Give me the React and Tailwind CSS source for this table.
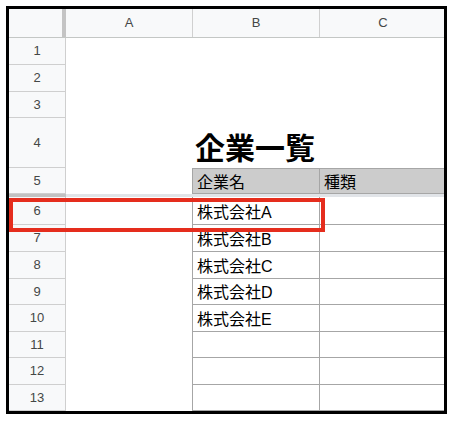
const rows = [
  { n: 1, h: "h-[27px]" },
  { n: 2, h: "h-[27px]" },
  { n: 3, h: "h-[26px]" },
  { n: 4, h: "h-[50px]", title: "企業一覧" },
  { n: 5, h: "h-[26px]", b: "企業名", c: "種類", head: true },
  { bar: true },
  { n: 6, h: "h-[28px]", b: "株式会社A", table: true },
  { n: 7, h: "h-[27px]", b: "株式会社B", table: true },
  { n: 8, h: "h-[27px]", b: "株式会社C", table: true },
  { n: 9, h: "h-[26px]", b: "株式会社D", table: true },
  { n: 10, h: "h-[27px]", b: "株式会社E", table: true },
  { n: 11, h: "h-[26px]", table: true },
  { n: 12, h: "h-[27px]", table: true },
  { n: 13, h: "h-[26px]", table: true },
];

const font = "font-['Liberation_Sans','Noto_Sans_CJK_JP',sans-serif]";

const App = () => {
  return (
    <div className="w-[456px] h-[424px] bg-white p-[6px]">
      <div className={`relative w-[441px] h-[408px] border-[3px] border-black overflow-hidden ${font}`}>
        {/* column headers */}
        <div className="flex h-[29px] bg-[#f8f9fa] border-b border-[#c4c7c5] text-[13px] text-[#444746]">
          <div className="w-[57px] shrink-0 flex justify-end">
            <div className="w-[4px] h-full bg-[#c4c4c4]" />
          </div>
          <div className="w-[127px] shrink-0 flex items-center justify-center border-r border-[#d0d0d0]">A</div>
          <div className="w-[127px] shrink-0 flex items-center justify-center border-r border-[#d0d0d0]">B</div>
          <div className="w-[127px] shrink-0 flex items-center justify-center border-r border-[#d0d0d0]">C</div>
        </div>

        {rows.map((r, i) =>
          r.bar ? (
            <div key={i} className="flex h-[3px]">
              <div className="w-[57px] shrink-0 bg-[#c2c2c2]" />
              <div className="flex-1 bg-[#e1e4e8]" />
            </div>
          ) : (
            <div key={i} className={`flex ${r.h}`}>
              <div className="w-[57px] shrink-0 flex items-center justify-center bg-[#f8f9fa] border-b border-r border-[#cfcfcf] text-[13px] text-[#444746]">
                {r.n}
              </div>
              <div className="w-[126px] shrink-0 bg-white" />
              {r.title ? (
                <div className="w-[254px] shrink-0 flex items-end pl-[3px] pb-[4px] text-[30px] leading-none font-bold text-black">
                  {r.title}
                </div>
              ) : r.head ? (
                <>
                  <div className="w-[128px] shrink-0 flex items-end pl-[4px] pb-[2px] bg-[#cccccc] border border-[#a6a6a6] text-[16px] leading-none text-black">
                    {r.b}
                  </div>
                  <div className="w-[127px] shrink-0 flex items-end pl-[4px] pb-[2px] bg-[#cccccc] border-y border-r border-[#a6a6a6] text-[16px] leading-none text-black">
                    {r.c}
                  </div>
                </>
              ) : r.table ? (
                <>
                  <div className="w-[128px] shrink-0 flex items-end pl-[4px] pb-[3px] border-l border-b border-r border-[#a6a6a6] text-[16px] leading-none text-black">
                    {r.b}
                  </div>
                  <div className="w-[127px] shrink-0 border-b border-r border-[#a6a6a6]" />
                </>
              ) : null}
            </div>
          )
        )}

        {/* selection highlight */}
        <div className="absolute left-0 top-[189px] w-[316px] h-[34px] border-[4px] border-[#e52d1d]" />
      </div>
    </div>
  );
};

export default App;
